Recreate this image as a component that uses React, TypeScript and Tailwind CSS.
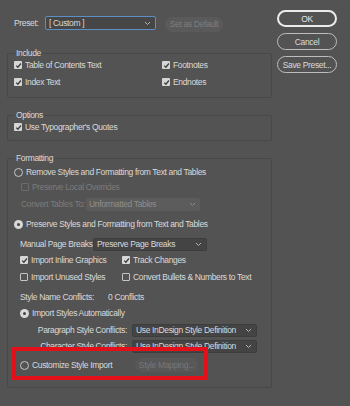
import React from "react";

const txt = "text-[#dadada]";
const dim = "text-[#7b7b7b]";

function Chevron({ color = "#b5b5b5" }: { color?: string }) {
  return (
    <svg width="7" height="5" viewBox="0 0 7 5" className="shrink-0">
      <polyline points="1,1 3.5,3.5 6,1" fill="none" stroke={color} strokeWidth="1" />
    </svg>
  );
}

function Check({ checked = false, disabled = false }: { checked?: boolean; disabled?: boolean }) {
  if (checked) {
    return (
      <span className="flex h-[8px] w-[8px] shrink-0 items-center justify-center rounded-[1px] bg-[#d6d6d6]">
        <svg width="7" height="7" viewBox="0 0 7 7">
          <polyline points="1.2,3.6 2.9,5.2 5.9,1.5" fill="none" stroke="#3c3c3c" strokeWidth="1.3" />
        </svg>
      </span>
    );
  }
  return (
    <span
      className={
        "h-[8px] w-[8px] shrink-0 rounded-[1px] border " +
        (disabled ? "border-[#6c6c6c]" : "border-[#c4c4c4]")
      }
    />
  );
}

function Radio({ on = false }: { on?: boolean }) {
  if (on) {
    return (
      <span className="flex h-[9px] w-[9px] shrink-0 items-center justify-center rounded-full bg-[#d8d8d8]">
        <span className="h-[3px] w-[3px] rounded-full bg-[#444]" />
      </span>
    );
  }
  return <span className="h-[9px] w-[9px] shrink-0 rounded-full border border-[#c6c6c6]" />;
}

function Select({
  label,
  w,
  disabled = false,
}: {
  label: string;
  w: string;
  disabled?: boolean;
}) {
  return (
    <div
      className={
        "flex h-[13px] items-center justify-between rounded-[2px] pl-[3px] pr-[4px] " +
        w +
        (disabled
          ? " bg-[#5c5c5c] text-[#8e8e8e]"
          : " border border-[#3d3d3d] bg-[#444444] text-[#dadada]")
      }
    >
      <span>{label}</span>
      <Chevron color={disabled ? "#8a8a8a" : "#b5b5b5"} />
    </div>
  );
}

export default function App() {
  return (
    <div
      className="relative flex h-[406px] w-[350px] overflow-hidden whitespace-nowrap bg-[#535353] text-[8.5px] leading-[10px] tracking-[-0.35px]"
      style={{ fontFamily: '"Liberation Sans", Arial, sans-serif' }}
    >
      {/* left side */}
      <div className="ml-[7px] flex w-[265px] flex-col">
        {/* preset row */}
        <div className="mt-[16px] flex h-[14px] items-center">
          <span className={"w-[38px] pl-[7px] " + txt}>Preset:</span>
          <div className="flex h-[14px] w-[111px] items-center justify-between rounded-[2px] border border-[#5d8fc6] bg-[#464646] pl-[3px] pr-[4px] text-[#dadada]">
            <span>[ Custom ]</span>
            <Chevron />
          </div>
          <div className="ml-[9px] mt-[2px] flex h-[15px] w-[58px] items-center justify-center rounded-full bg-[#5a5a5a] text-[#7e7e7e]">
            Set as Default
          </div>
        </div>

        {/* Include */}
        <fieldset className="mt-[18px] rounded-[2px] border border-[#484848] pb-[8px]">
          <legend className={"ml-[7px] px-[1px] " + txt}>Include</legend>
          <div className="grid grid-cols-[148px_1fr] gap-y-[3px] pl-[6px]">
            <label className={"flex h-[14px] items-center gap-[3px] " + txt}>
              <Check checked /> Table of Contents Text
            </label>
            <label className={"flex h-[14px] items-center gap-[3px] " + txt}>
              <Check checked /> Footnotes
            </label>
            <label className={"flex h-[14px] items-center gap-[3px] " + txt}>
              <Check checked /> Index Text
            </label>
            <label className={"flex h-[14px] items-center gap-[3px] " + txt}>
              <Check checked /> Endnotes
            </label>
          </div>
        </fieldset>

        {/* Options */}
        <fieldset className="mt-[12px] rounded-[2px] border border-[#484848] pb-[6px]">
          <legend className={"ml-[7px] px-[1px] " + txt}>Options</legend>
          <label className={"flex h-[14px] items-center gap-[3px] pl-[6px] " + txt}>
            <Check checked /> Use Typographer's Quotes
          </label>
        </fieldset>

        {/* Formatting */}
        <fieldset className="mt-[12px] rounded-[2px] border border-[#484848] pb-[15px]">
          <legend className={"ml-[7px] px-[1px] " + txt}>Formatting</legend>

          <label className={"mt-[2px] flex h-[14px] items-center gap-[3px] pl-[6px] " + txt}>
            <Radio /> Remove Styles and Formatting from Text and Tables
          </label>
          <label className={"mt-[1px] flex h-[14px] items-center gap-[3px] pl-[13px] " + dim}>
            <Check disabled /> Preserve Local Overrides
          </label>
          <div className={"mt-[3px] flex h-[14px] items-center pl-[13px] " + dim}>
            <span className="w-[65px]">Convert Tables To:</span>
            <Select label="Unformatted Tables" w="w-[114px]" disabled />
          </div>

          <label className={"mt-[6px] flex h-[14px] items-center gap-[3px] pl-[6px] " + txt}>
            <Radio on /> Preserve Styles and Formatting from Text and Tables
          </label>
          <div className={"mt-[6px] flex h-[14px] items-center pl-[12px] " + txt}>
            <span className="w-[73px]">Manual Page Breaks:</span>
            <Select label="Preserve Page Breaks" w="w-[114px]" />
          </div>

          <div className="mt-[2px] grid grid-cols-[102px_1fr] gap-y-[3px] pl-[12px]">
            <label className={"flex h-[14px] items-center gap-[3px] " + txt}>
              <Check checked /> Import Inline Graphics
            </label>
            <label className={"flex h-[14px] items-center gap-[3px] " + txt}>
              <Check checked /> Track Changes
            </label>
            <label className={"flex h-[14px] items-center gap-[3px] " + txt}>
              <Check /> Import Unused Styles
            </label>
            <label className={"flex h-[14px] items-center gap-[3px] " + txt}>
              <Check /> Convert Bullets &amp; Numbers to Text
            </label>
          </div>

          <div className={"mt-[6px] flex h-[14px] items-center pl-[12px] " + txt}>
            <span className="w-[88px]">Style Name Conflicts:</span>
            <span>0 Conflicts</span>
          </div>
          <label className={"mt-[2px] flex h-[14px] items-center gap-[3px] pl-[12px] " + txt}>
            <Radio on /> Import Styles Automatically
          </label>
          <div className={"mt-[3px] flex h-[14px] items-center " + txt}>
            <span className="w-[124px] pr-[5px] text-right">Paragraph Style Conflicts:</span>
            <Select label="Use InDesign Style Definition" w="w-[125px]" />
          </div>
          <div className={"mt-[2px] flex h-[14px] items-center " + txt}>
            <span className="w-[124px] pr-[5px] text-right">Character Style Conflicts:</span>
            <Select label="Use InDesign Style Definition" w="w-[125px]" />
          </div>
          <div className={"mt-[5px] flex h-[14px] items-center pl-[12px] " + txt}>
            <label className="flex w-[115px] items-center gap-[3px]">
              <Radio /> Customize Style Import
            </label>
            <div className="flex h-[14px] w-[63px] items-center justify-center rounded-full bg-[#585858] text-[#777777]">
              Style Mapping...
            </div>
          </div>
        </fieldset>
      </div>

      {/* right buttons */}
      <div className="ml-[5px] mt-[10px] flex w-[60px] flex-col gap-[6px]">
        <button className="flex h-[17px] items-center justify-center rounded-full border-2 border-[#ececec] text-[#e6e6e6]">
          OK
        </button>
        <button className="flex h-[17px] items-center justify-center rounded-full border border-[#bdbdbd] text-[#dadada]">
          Cancel
        </button>
        <button className="flex h-[17px] items-center justify-center rounded-full border border-[#bdbdbd] text-[#dadada]">
          Save Preset...
        </button>
      </div>

      {/* red annotation box */}
      <div className="pointer-events-none absolute left-[12px] top-[347px] h-[33px] w-[196px] border-[4px] border-[#e3101a]" />
    </div>
  );
}
